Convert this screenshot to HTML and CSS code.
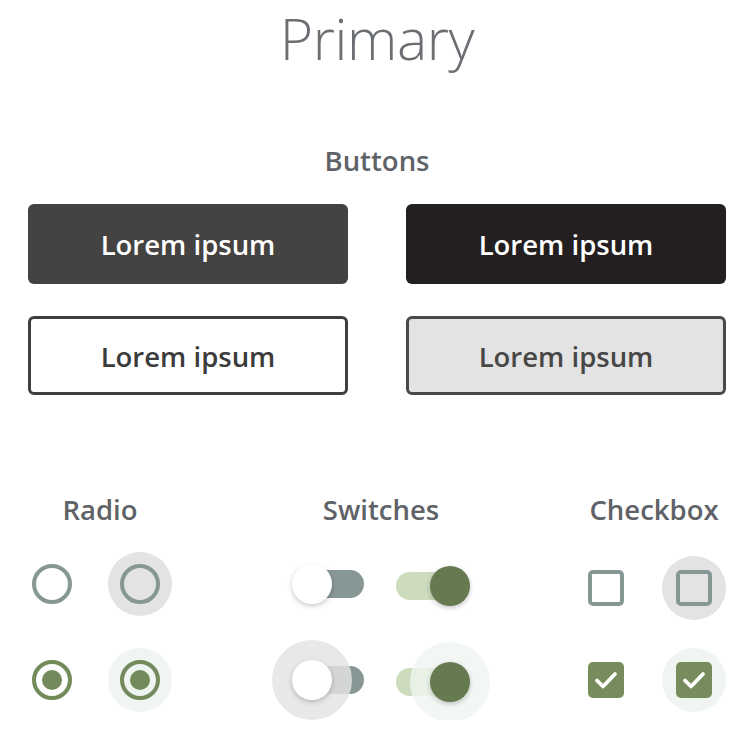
FILE: index.html
```html
<!DOCTYPE html>
<html>
<head>
<meta charset="utf-8">
<link rel="stylesheet" href="styles.css">
</head>
<body>
<div class="page">
  <h1 class="title">Primary</h1>
  <h2 class="section-title">Buttons</h2>
  <div class="btn-grid">
    <button class="btn btn-dark">Lorem ipsum</button>
    <button class="btn btn-black">Lorem ipsum</button>
    <button class="btn btn-outline">Lorem ipsum</button>
    <button class="btn btn-light">Lorem ipsum</button>
  </div>
  <div class="controls">
    <div class="col col-radio">
      <h3 class="col-title shift">Radio</h3>
      <div class="cells">
        <div class="cell"><span class="radio"></span></div>
        <div class="cell"><span class="halo halo-grey"><span class="radio"></span></span></div>
        <div class="cell"><span class="radio radio-on"><span class="dot"></span></span></div>
        <div class="cell"><span class="halo halo-green"><span class="radio radio-on"><span class="dot"></span></span></span></div>
      </div>
    </div>
    <div class="col col-switch">
      <h3 class="col-title">Switches</h3>
      <div class="switch-row">
        <span class="switch switch-off"><span class="thumb"></span></span>
        <span class="switch switch-on"><span class="thumb"></span></span>
      </div>
      <div class="switch-row">
        <span class="switch switch-off"><span class="sw-halo"></span><span class="thumb"></span></span>
        <span class="switch switch-on"><span class="sw-halo"></span><span class="thumb"></span></span>
      </div>
    </div>
    <div class="col col-check">
      <h3 class="col-title shift">Checkbox</h3>
      <div class="cells cells-check">
        <div class="cell"><span class="check"></span></div>
        <div class="cell"><span class="halo halo-grey"><span class="check"></span></span></div>
        <div class="cell"><span class="check check-on"><svg viewBox="0 0 36 36" width="36" height="36"><polyline points="9,18.5 15,24.5 27,12" fill="none" stroke="#fff" stroke-width="3.8" stroke-linecap="round" stroke-linejoin="round"/></svg></span></div>
        <div class="cell"><span class="halo halo-green"><span class="check check-on"><svg viewBox="0 0 36 36" width="36" height="36"><polyline points="9,18.5 15,24.5 27,12" fill="none" stroke="#fff" stroke-width="3.8" stroke-linecap="round" stroke-linejoin="round"/></svg></span></span></div>
      </div>
    </div>
  </div>
</div>
</body>
</html>
```

FILE: styles.css
```css
html, body {
  margin: 0;
  padding: 0;
  background: #ffffff;
}
body {
  font-family: "Open Sans", "Noto Sans", sans-serif;
}
.page {
  width: 754px;
}
.title {
  margin: 0;
  font-size: 57px;
  line-height: 76px;
  letter-spacing: -0.4px;
  font-weight: 300;
  text-align: center;
  color: #6b6e72;
}
.section-title {
  margin: 71px 0 0;
  font-size: 27.5px;
  line-height: 28px;
  font-weight: 600;
  text-align: center;
  color: #5f6267;
}
.btn-grid {
  margin-top: 29px;
  display: grid;
  grid-template-columns: 320px 320px;
  grid-template-rows: 80px 79px;
  column-gap: 58px;
  row-gap: 32px;
  justify-content: center;
}
.btn {
  font-family: "Open Sans", "Noto Sans", sans-serif;
  font-size: 27.5px;
  line-height: 30px;
  font-weight: 600;
  border-radius: 6px;
  border: 0;
  padding: 2px 0 0;
  margin: 0;
  display: flex;
  align-items: center;
  justify-content: center;
}
.btn-dark {
  background: #454341;
  color: #ffffff;
}
.btn-black {
  background: #231f20;
  color: #ffffff;
}
.btn-outline {
  background: #ffffff;
  border: 3px solid #3f3f3f;
  color: #3c3c3c;
}
.btn-light {
  background: #e3e3e3;
  border: 3px solid #494949;
  color: #474747;
}
.controls {
  margin-top: 101px;
  display: flex;
  padding-left: 20px;
}
.col-title {
  margin: 0;
  font-size: 27.5px;
  line-height: 28px;
  font-weight: 600;
  text-align: center;
  color: #5f6267;
}
.col-title.shift {
  padding-left: 8px;
}
.col-radio {
  width: 152px;
}
.col-switch {
  width: 218px;
  margin-left: 100px;
}
.col-check {
  width: 152px;
  margin-left: 84px;
}
.cells {
  margin-top: 20px;
  display: grid;
  grid-template-columns: 64px 64px;
  grid-template-rows: 80px 80px;
  column-gap: 24px;
  row-gap: 16px;
}
.cells-check {
  padding-top: 4px;
  row-gap: 12px;
}
.cell {
  display: flex;
  align-items: center;
  justify-content: center;
}
.halo {
  width: 64px;
  height: 64px;
  border-radius: 50%;
  display: flex;
  align-items: center;
  justify-content: center;
}
.halo-grey {
  background: #e3e3e3;
}
.halo-green {
  background: #f1f5f1;
}
.radio {
  box-sizing: border-box;
  width: 40px;
  height: 40px;
  border-radius: 50%;
  border: 4px solid #879795;
  display: flex;
  align-items: center;
  justify-content: center;
}
.radio-on {
  border-color: #738a5b;
}
.dot {
  width: 20px;
  height: 20px;
  border-radius: 50%;
  background: #738a5b;
}
.check {
  box-sizing: border-box;
  width: 36px;
  height: 36px;
  border-radius: 5px;
  border: 4px solid #879795;
  display: block;
}
.check-on {
  border: 0;
  background: #768c5c;
}
.check-on svg {
  display: block;
}
.switch-row {
  height: 80px;
  display: flex;
  align-items: center;
  gap: 32px;
  padding-left: 24px;
}
.switch-row:first-of-type {
  margin-top: 20px;
}
.switch-row + .switch-row {
  margin-top: 16px;
}
.switch {
  position: relative;
  width: 68px;
  height: 28px;
  border-radius: 14px;
  display: block;
}
.switch-off {
  background: #879795;
}
.switch-on {
  background: #cddcbf;
  top: 2px;
}
.thumb {
  position: absolute;
  top: -6px;
  width: 40px;
  height: 40px;
  border-radius: 50%;
  box-shadow: 0 2px 5px rgba(0, 0, 0, 0.22);
}
.switch-off .thumb {
  left: -4px;
  background: #ffffff;
}
.switch-on .thumb {
  left: 34px;
  background: #657a4f;
}
.sw-halo {
  position: absolute;
  top: -26px;
  width: 80px;
  height: 80px;
  border-radius: 50%;
}
.switch-off .sw-halo {
  left: -24px;
  background: rgba(227, 227, 227, 0.83);
}
.switch-on .sw-halo {
  left: 14px;
  background: rgba(240, 245, 240, 0.8);
}
```
